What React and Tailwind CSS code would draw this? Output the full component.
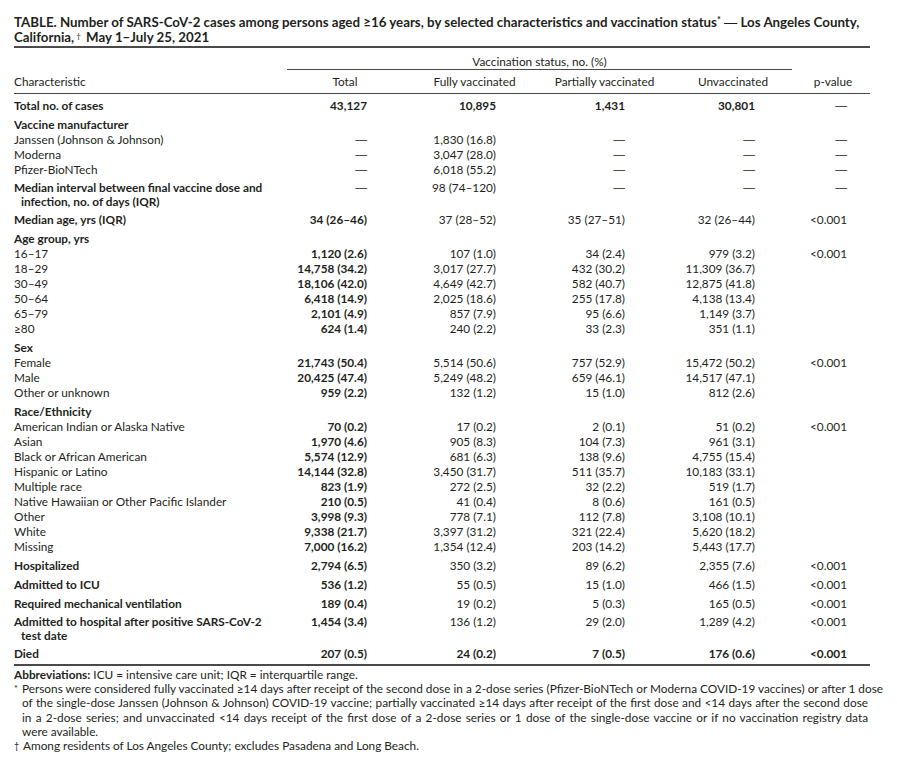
import React from 'react';

const groups = [
  [{ label: 'Total no. of cases', bold: true, allBold: true, vals: ['43,127', '10,895', '1,431', '30,801', '—'] }],
  [
    { label: 'Vaccine manufacturer', bold: true, vals: ['', '', '', '', ''] },
    { label: 'Janssen (Johnson & Johnson)', vals: ['—', '1,830 (16.8)', '—', '—', '—'] },
    { label: 'Moderna', vals: ['—', '3,047 (28.0)', '—', '—', '—'] },
    { label: 'Pfizer-BioNTech', vals: ['—', '6,018 (55.2)', '—', '—', '—'] },
  ],
  [
    {
      label: 'Median interval between final vaccine dose and',
      label2: 'infection, no. of days (IQR)',
      bold: true,
      vals: ['—', '98 (74–120)', '—', '—', '—'],
    },
  ],
  [{ label: 'Median age, yrs (IQR)', bold: true, vals: ['34 (26–46)', '37 (28–52)', '35 (27–51)', '32 (26–44)', '<0.001'] }],
  [
    { label: 'Age group, yrs', bold: true, vals: ['', '', '', '', ''] },
    { label: '16–17', vals: ['1,120 (2.6)', '107 (1.0)', '34 (2.4)', '979 (3.2)', '<0.001'] },
    { label: '18–29', vals: ['14,758 (34.2)', '3,017 (27.7)', '432 (30.2)', '11,309 (36.7)', ''] },
    { label: '30–49', vals: ['18,106 (42.0)', '4,649 (42.7)', '582 (40.7)', '12,875 (41.8)', ''] },
    { label: '50–64', vals: ['6,418 (14.9)', '2,025 (18.6)', '255 (17.8)', '4,138 (13.4)', ''] },
    { label: '65–79', vals: ['2,101 (4.9)', '857 (7.9)', '95 (6.6)', '1,149 (3.7)', ''] },
    { label: '≥80', vals: ['624 (1.4)', '240 (2.2)', '33 (2.3)', '351 (1.1)', ''] },
  ],
  [
    { label: 'Sex', bold: true, vals: ['', '', '', '', ''] },
    { label: 'Female', vals: ['21,743 (50.4)', '5,514 (50.6)', '757 (52.9)', '15,472 (50.2)', '<0.001'] },
    { label: 'Male', vals: ['20,425 (47.4)', '5,249 (48.2)', '659 (46.1)', '14,517 (47.1)', ''] },
    { label: 'Other or unknown', vals: ['959 (2.2)', '132 (1.2)', '15 (1.0)', '812 (2.6)', ''] },
  ],
  [
    { label: 'Race/Ethnicity', bold: true, vals: ['', '', '', '', ''] },
    { label: 'American Indian or Alaska Native', vals: ['70 (0.2)', '17 (0.2)', '2 (0.1)', '51 (0.2)', '<0.001'] },
    { label: 'Asian', vals: ['1,970 (4.6)', '905 (8.3)', '104 (7.3)', '961 (3.1)', ''] },
    { label: 'Black or African American', vals: ['5,574 (12.9)', '681 (6.3)', '138 (9.6)', '4,755 (15.4)', ''] },
    { label: 'Hispanic or Latino', vals: ['14,144 (32.8)', '3,450 (31.7)', '511 (35.7)', '10,183 (33.1)', ''] },
    { label: 'Multiple race', vals: ['823 (1.9)', '272 (2.5)', '32 (2.2)', '519 (1.7)', ''] },
    { label: 'Native Hawaiian or Other Pacific Islander', vals: ['210 (0.5)', '41 (0.4)', '8 (0.6)', '161 (0.5)', ''] },
    { label: 'Other', vals: ['3,998 (9.3)', '778 (7.1)', '112 (7.8)', '3,108 (10.1)', ''] },
    { label: 'White', vals: ['9,338 (21.7)', '3,397 (31.2)', '321 (22.4)', '5,620 (18.2)', ''] },
    { label: 'Missing', vals: ['7,000 (16.2)', '1,354 (12.4)', '203 (14.2)', '5,443 (17.7)', ''] },
  ],
  [{ label: 'Hospitalized', bold: true, vals: ['2,794 (6.5)', '350 (3.2)', '89 (6.2)', '2,355 (7.6)', '<0.001'] }],
  [{ label: 'Admitted to ICU', bold: true, vals: ['536 (1.2)', '55 (0.5)', '15 (1.0)', '466 (1.5)', '<0.001'] }],
  [{ label: 'Required mechanical ventilation', bold: true, vals: ['189 (0.4)', '19 (0.2)', '5 (0.3)', '165 (0.5)', '<0.001'] }],
  [
    {
      label: 'Admitted to hospital after positive SARS-CoV-2',
      label2: 'test date',
      bold: true,
      vals: ['1,454 (3.4)', '136 (1.2)', '29 (2.0)', '1,289 (4.2)', '<0.001'],
    },
  ],
  [{ label: 'Died', bold: true, allBold: true, vals: ['207 (0.5)', '24 (0.2)', '7 (0.5)', '176 (0.6)', '<0.001'] }],
];

function Row({ row }) {
  const lh = row.label2 ? 'leading-[13.5px]' : 'leading-[15px]';
  return (
    <div className={`grid grid-cols-[273px_80px_129px_129px_130px_92px] ${lh}`}>
      <div className={`whitespace-nowrap ${row.bold ? 'font-bold' : ''}`}>
        <div>{row.label}</div>
        {row.label2 && <div className="pl-[7px]">{row.label2}</div>}
      </div>
      {row.vals.map((v, i) => {
        if (v === '—') {
          return (
            <div key={i} className="text-right font-['Liberation_Sans',sans-serif]">
              —
            </div>
          );
        }
        const bold = row.allBold || i === 0;
        return (
          <div key={i} className={`text-right whitespace-nowrap ${bold ? 'font-bold' : ''}`}>
            {v}
          </div>
        );
      })}
    </div>
  );
}

export default function App() {
  return (
    <div className="bg-white min-h-[765px] text-[#231f20] font-['Lato',sans-serif]">
      <div className="ml-[14px] w-[856px] pt-[15px]">
        <div className="text-[13.3px] font-bold leading-[14.5px] pb-[2px] border-b-2 border-[#4a4a4a] whitespace-nowrap">
          <div className="h-[14.5px]">
            TABLE. Number of SARS-CoV-2 cases among persons aged ≥16 years, by selected characteristics and vaccination status<sup className="text-[9px]">*</sup>{' '}
            <span className="font-['Liberation_Sans',sans-serif] font-normal leading-[0]">—</span> Los Angeles County,
          </div>
          <div className="h-[14.5px]">
            California,<sup className="text-[8px] font-normal px-[2px] -top-[3px]">†</sup> May 1–July 25, 2021
          </div>
        </div>

        <div className="text-[11.8px]">
          <div className="flex pt-[7px]">
            <div className="w-[273px]" />
            <div className="w-[505px] text-center leading-[14px] border-b border-[#4a4a4a]">
              Vaccination status, no. (%)
            </div>
          </div>

          <div className="grid grid-cols-[266px_130px_129px_131px_126px_74px] pt-[5px] pb-[4px] leading-[14px] border-b border-[#4a4a4a]">
            <div>Characteristic</div>
            <div className="text-center">Total</div>
            <div className="text-center">Fully vaccinated</div>
            <div className="text-center">Partially vaccinated</div>
            <div className="text-center">Unvaccinated</div>
            <div className="text-center">p-value</div>
          </div>

          <div className="pb-[3px] border-b-2 border-[#4a4a4a]">
            {groups.map((g, gi) => (
              <div key={gi} className="pt-[4px]">
                {g.map((r, ri) => (
                  <Row key={ri} row={r} />
                ))}
              </div>
            ))}
          </div>

          <div className="pt-[2px] leading-[14.2px]">
            <div>
              <span className="font-bold">Abbreviations:</span> ICU = intensive care unit; IQR = interquartile range.
            </div>
            <div className="flex">
              <div className="w-[8px] shrink-0 text-[9px]">*</div>
              <div className="w-[846px]">
                <div className="text-justify [text-align-last:justify] whitespace-nowrap">
                  Persons were considered fully vaccinated ≥14 days after receipt of the second dose in a 2-dose series (Pfizer-BioNTech or Moderna COVID-19 vaccines) or after 1 dose
                </div>
                <div className="text-justify [text-align-last:justify] whitespace-nowrap">
                  of the single-dose Janssen (Johnson &amp; Johnson) COVID-19 vaccine; partially vaccinated ≥14 days after receipt of the first dose and &lt;14 days after the second dose
                </div>
                <div className="text-justify [text-align-last:justify] whitespace-nowrap">
                  in a 2-dose series; and unvaccinated &lt;14 days receipt of the first dose of a 2-dose series or 1 dose of the single-dose vaccine or if no vaccination registry data
                </div>
                <div>were available.</div>
              </div>
            </div>
            <div className="flex">
              <div className="w-[9px] shrink-0 text-[9px]">†</div>
              <div>Among residents of Los Angeles County; excludes Pasadena and Long Beach.</div>
            </div>
          </div>
        </div>
      </div>
    </div>
  );
}
